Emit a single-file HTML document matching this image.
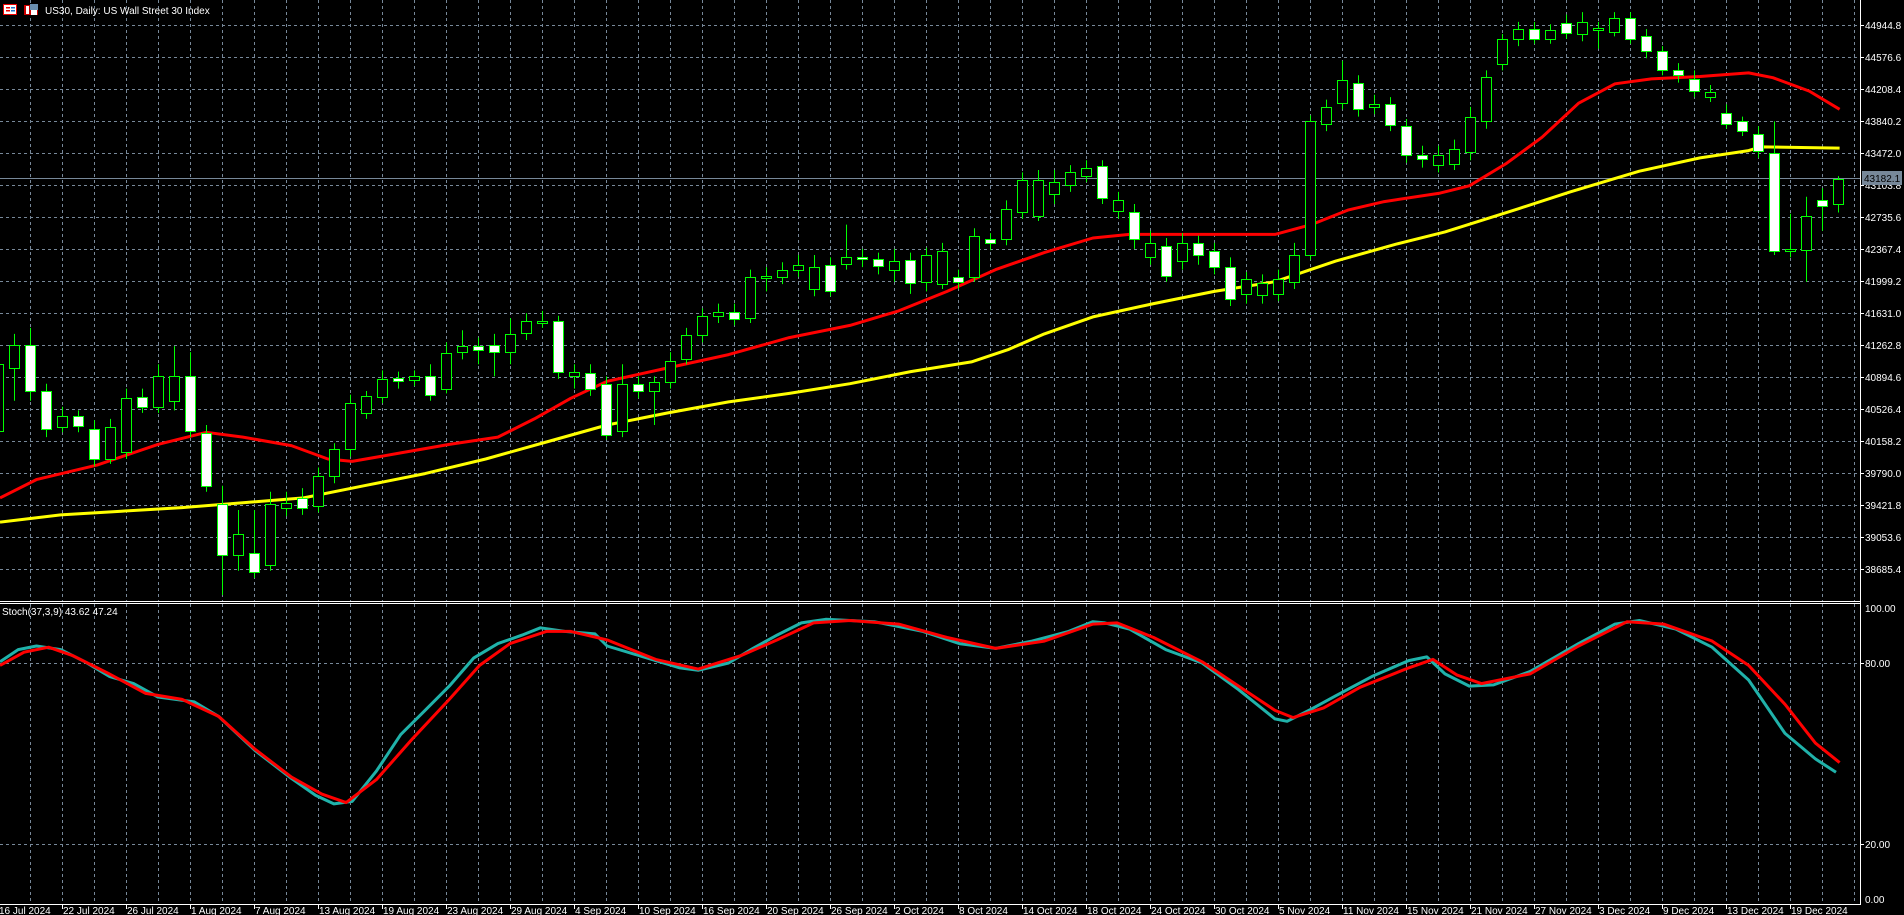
<!DOCTYPE html>
<html><head><meta charset="utf-8"><style>
html,body{margin:0;padding:0;background:#000;width:1904px;height:915px;overflow:hidden}
svg{position:absolute;left:0;top:0}
text{font-family:"Liberation Sans",sans-serif;font-size:10px;fill:#fff}
</style></head><body>
<svg id="c" width="1904" height="915" viewBox="0 0 1904 915">
<g id="grid" stroke="#778899" stroke-width="1" stroke-dasharray="3,3"></g>
<line x1="0" y1="178.5" x2="1860" y2="178.5" stroke="#778899"/>
<g id="ma"></g>
<g id="cand"></g>
<g id="st"></g>
<g stroke="#fff" stroke-width="1">
<line x1="1860.5" y1="0" x2="1860.5" y2="904"/>
<line x1="0" y1="601.5" x2="1861" y2="601.5"/>
<line x1="0" y1="603.5" x2="1861" y2="603.5"/>
<line x1="0" y1="904.5" x2="1861" y2="904.5"/>
</g>
<g id="ax"></g>
<rect x="1862" y="171" width="40" height="14" fill="#778899"/>
<text x="1864" y="182" style="fill:#000">43182.1</text>
<g>
<rect x="3.5" y="4.5" width="13" height="10" fill="#fff" stroke="#e00"/>
<rect x="6" y="7" width="4" height="1.5" fill="#e00"/><rect x="11" y="7" width="4" height="1.5" fill="#27c"/>
<rect x="6" y="10" width="4" height="1.5" fill="#e00"/><rect x="11" y="10" width="4" height="1.5" fill="#27c"/>
<rect x="24" y="5" width="14" height="10" fill="#c00"/><rect x="26" y="6" width="3" height="8" fill="#fff"/><rect x="30" y="4" width="8" height="6" fill="#6a8fb0"/><rect x="31" y="10" width="6" height="5" fill="#fff"/>
</g>
<text x="45" y="14">US30, Daily:  US Wall Street 30 Index</text>
<text x="2" y="615">Stoch(37,3,9) 43.62 47.24</text>
</svg>
<script>
var NS="http://www.w3.org/2000/svg";
function el(p,t,a){var e=document.createElementNS(NS,t);for(var k in a)e.setAttribute(k,a[k]);p.appendChild(e);return e;}
var G=document.getElementById('grid'),ax=document.getElementById('ax');
for(var x=30;x<1860;x+=32){el(G,'line',{x1:x+.5,y1:0,x2:x+.5,y2:601});el(G,'line',{x1:x+.5,y1:604,x2:x+.5,y2:904});}
var pr=["44944.8","44576.6","44208.4","43840.2","43472.0","43103.8","42735.6","42367.4","41999.2","41631.0","41262.8","40894.6","40526.4","40158.2","39790.0","39421.8","39053.6","38685.4"];
for(var j=0;j<18;j++){var y=25+32*j;el(G,'line',{x1:0,y1:y+.5,x2:1860,y2:y+.5});
el(ax,'line',{x1:1860,y1:y+.5,x2:1864,y2:y+.5,stroke:'#fff'});
var t=el(ax,'text',{x:1865,y:y+4});t.textContent=pr[j];}
[[663,"80.00"],[844,"20.00"]].forEach(function(a){el(G,'line',{x1:0,y1:a[0]+.5,x2:1860,y2:a[0]+.5});el(ax,'line',{x1:1860,y1:a[0]+.5,x2:1864,y2:a[0]+.5,stroke:'#fff'});var t=el(ax,'text',{x:1865,y:a[0]+4});t.textContent=a[1];});
[[608,"100.00"],[899,"0.00"]].forEach(function(a){var t=el(ax,'text',{x:1865,y:a[0]+4});t.textContent=a[1];});
var d=["16 Jul 2024","22 Jul 2024","26 Jul 2024","1 Aug 2024","7 Aug 2024","13 Aug 2024","19 Aug 2024","23 Aug 2024","29 Aug 2024","4 Sep 2024","10 Sep 2024","16 Sep 2024","20 Sep 2024","26 Sep 2024","2 Oct 2024","8 Oct 2024","14 Oct 2024","18 Oct 2024","24 Oct 2024","30 Oct 2024","5 Nov 2024","11 Nov 2024","15 Nov 2024","21 Nov 2024","27 Nov 2024","3 Dec 2024","9 Dec 2024","13 Dec 2024","19 Dec 2024"];
for(var i=0;i<d.length;i++){var x=-2+64*i;el(ax,'line',{x1:x+.5,y1:904,x2:x+.5,y2:909,stroke:'#fff'});var t=el(ax,'text',{x:x+1,y:914});t.textContent=d[i];}
var s=1904/1568;
var C=[[300,355,'g',290,360],[284,303,'g',275,330],[284,322,'w',270,330],[322,353,'w',316,360],[343,352,'g',335,356],[343,351,'w',338,356],[353,378,'w',346,384],[352,378,'g',345,382],[328,372,'g',320,378],[327,335,'w',320,340],[310,335,'g',300,340],[310,330,'g',285,338],[310,355,'w',290,360],[357,400,'w',350,405],[415,457,'w',400,490],[440,457,'g',420,470],[455,471,'w',420,476],[415,465,'g',405,470],[414,418,'g',405,425],[410,418,'w',402,424],[392,417,'g',385,422],[370,392,'g',365,398],[332,370,'g',325,376],[326,340,'g',322,345],[312,327,'g',305,332],[311,314,'w',306,320],[310,313,'g',305,318],[310,325,'w',300,330],[291,320,'g',282,324],[285,290,'g',272,296],[285,288,'w',278,300],[284,290,'w',275,310],[275,290,'g',262,300],[264,274,'g',258,280],[264,266,'g',256,270],[264,306,'w',260,312],[306,310,'g',300,320],[307,320,'w',300,326],[316,358,'w',310,362],[316,355,'g',300,360],[316,322,'w',310,328],[315,322,'g',310,350],[297,315,'g',290,320],[276,296,'g',270,300],[260,276,'g',254,282],[257,260,'g',250,266],[257,263,'w',250,268],[228,262,'g',222,266],[227,229,'g',220,240],[222,228,'g',216,234],[218,222,'g',210,228],[220,238,'g',210,244],[218,240,'w',212,244],[212,217,'g',185,222],[212,213,'w',205,220],[213,219,'w',208,226],[215,222,'g',205,232],[214,233,'w',208,242],[210,232,'g',204,240],[207,234,'g',200,238],[228,232,'w',222,238],[194,228,'g',188,232],[197,200,'w',192,206],[172,197,'g',165,202],[148,175,'g',142,180],[148,178,'g',140,182],[150,160,'g',140,168],[142,152,'g',136,158],[138,145,'g',132,150],[137,163,'w',132,168],[165,174,'g',158,180],[175,197,'w',168,205],[200,212,'g',190,218],[203,227,'w',196,232],[200,215,'g',192,222],[200,210,'w',194,218],[207,220,'w',200,226],[220,246,'w',212,252],[230,242,'g',224,250],[233,243,'g',226,250],[230,242,'g',222,248],[210,232,'g',200,238],[100,210,'g',95,214],[88,102,'g',82,108],[66,85,'g',50,90],[68,90,'w',62,96],[86,88,'g',78,94],[86,103,'w',80,108],[104,128,'w',98,134],[128,131,'w',120,138],[128,136,'g',120,142],[123,135,'g',115,140],[96,125,'g',88,132],[63,100,'g',58,106],[32,53,'g',28,58],[24,32,'g',18,38],[24,32,'w',18,36],[25,32,'g',20,36],[19,27,'w',12,32],[18,28,'g',10,34],[23,25,'g',18,40],[15,26,'g',10,30],[15,32,'w',10,36],[30,42,'w',24,48],[42,58,'w',38,62],[58,62,'w',52,68],[65,75,'w',58,80],[76,80,'g',70,84],[93,102,'w',86,106],[100,108,'w',96,112],[110,124,'w',104,130],[126,207,'w',100,210],[205,207,'g',176,212],[178,206,'g',162,232],[165,170,'w',155,190],[147,168,'g',145,175]];
var cg=document.getElementById('cand');
C.forEach(function(c,i){var k=i-1;var x=14+16*k;
var t=Math.round(c[0]*s),b=Math.round(c[1]*s);if(b-t<2)b=t+2;
el(cg,'line',{x1:x+.5,y1:c[3]*s,x2:x+.5,y2:c[4]*s,stroke:'#00ff00'});
el(cg,'rect',{x:x-4.5,y:t+.5,width:10,height:b-t,fill:c[2]=='w'?'#fff':'#000',stroke:'#00ff00'});});
function pl(g,pts,col,w){el(g,'polyline',{points:pts.map(function(p){return (p[0]*s).toFixed(1)+','+(p[1]*s).toFixed(1)}).join(' '),fill:'none',stroke:col,'stroke-width':w,'stroke-linejoin':'round'});}
var ma=document.getElementById('ma');
pl(ma,[[0,430],[50,424],[100,421],[150,418],[200,414],[250,410],[300,400],[350,390],[400,378],[450,364],[500,350],[550,340],[600,331],[650,324],[700,316],[750,306],[800,298],[830,288],[860,275],[900,261],[950,250],[1000,240],[1050,232],[1100,215],[1150,201],[1190,191],[1250,172],[1293,158],[1350,141],[1400,130],[1440,124],[1450,121],[1515,122]],'#ffff00',3);
pl(ma,[[0,410],[30,395],[80,383],[130,366],[170,356],[200,360],[240,367],[270,378],[290,380],[330,373],[370,366],[410,360],[440,345],[470,328],[500,314],[550,303],[600,292],[650,278],[700,268],[740,256],[780,240],[820,222],[860,208],[900,196],[930,193],[980,193],[1020,193],[1050,193],[1080,185],[1110,173],[1140,166],[1186,159],[1210,153],[1240,135],[1270,113],[1300,85],[1330,69],[1360,65],[1400,63],[1440,60],[1460,64],[1490,75],[1515,90]],'#ff0000',3);
var st=document.getElementById('st');
pl(st,[[0,545],[15,535],[30,532],[50,535],[70,545],[90,557],[110,563],[130,574],[160,578],[180,590],[210,618],[240,641],[260,655],[275,662],[290,660],[310,635],[330,605],[350,585],[370,565],[390,542],[410,530],[430,523],[445,517],[465,520],[490,522],[500,532],[530,541],[560,550],[575,552],[600,546],[620,534],[640,523],[660,513],[680,510],[720,512],[760,520],[790,530],[820,534],[850,528],[880,520],[900,512],[910,513],[930,518],[960,535],[990,546],[1020,568],[1050,592],[1060,594],[1080,584],[1100,573],[1130,557],[1160,544],[1175,541],[1190,555],[1210,565],[1230,564],[1260,553],[1300,530],[1330,514],[1350,511],[1380,518],[1410,533],[1440,560],[1470,604],[1495,625],[1512,636]],'#20b2aa',3);
pl(st,[[0,548],[20,537],[40,533],[60,540],[90,555],[120,571],[150,576],[180,590],[210,617],[240,640],[265,654],[285,661],[310,642],[340,608],[370,576],[395,548],[420,530],[450,520],[470,520],[500,527],[540,543],[575,551],[610,540],[640,527],[670,513],[700,511],[740,514],[780,525],[820,534],[860,528],[900,514],[920,513],[950,525],[990,545],[1020,565],[1050,585],[1065,591],[1090,583],[1120,566],[1160,550],[1180,543],[1200,556],[1220,563],[1260,555],[1300,532],[1340,512],[1370,514],[1410,528],[1440,548],[1470,580],[1495,612],[1515,628]],'#ff0000',3);
</script>
</body></html>
